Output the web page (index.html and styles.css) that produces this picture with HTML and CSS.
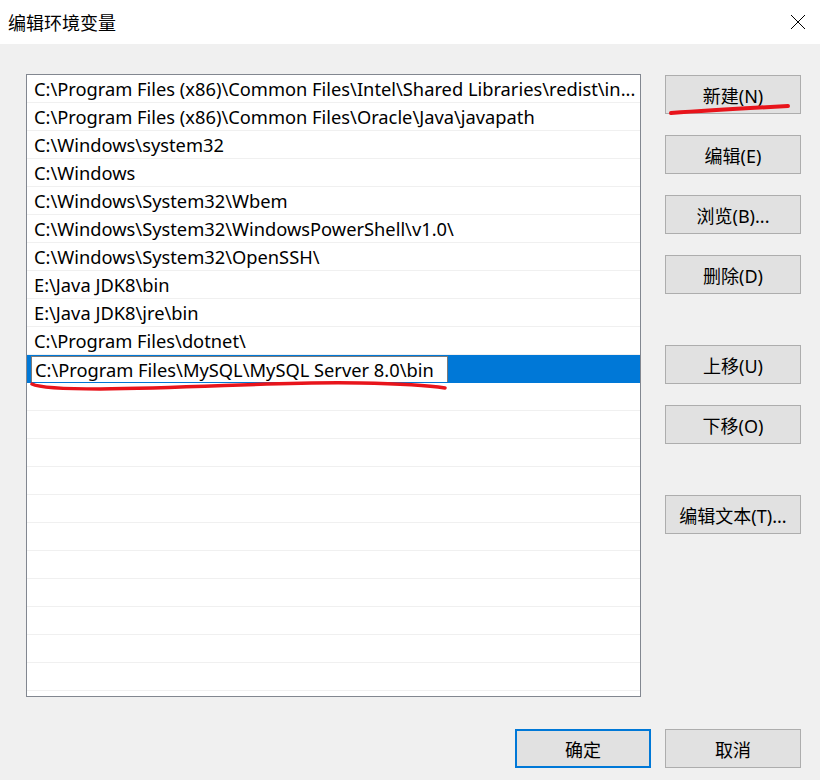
FILE: index.html
```html
<!DOCTYPE html>
<html lang="zh-CN">
<head>
<meta charset="utf-8">
<title>编辑环境变量</title>
<link rel="stylesheet" href="styles.css">
</head>
<body>
<div class="dialog">
  <div class="titlebar">
    <span class="title">编辑环境变量</span>
    <svg class="close" width="16" height="16" viewBox="0 0 16 16"><path d="M1 1 L15 15 M15 1 L1 15" stroke="#000" stroke-width="1" fill="none"/></svg>
  </div>
  <div class="body">
    <div class="main">
      <div class="list">
        <div class="row">C:\Program Files (x86)\Common Files\Intel\Shared Libraries\redist\in...</div>
        <div class="row">C:\Program Files (x86)\Common Files\Oracle\Java\javapath</div>
        <div class="row">C:\Windows\system32</div>
        <div class="row">C:\Windows</div>
        <div class="row">C:\Windows\System32\Wbem</div>
        <div class="row">C:\Windows\System32\WindowsPowerShell\v1.0\</div>
        <div class="row">C:\Windows\System32\OpenSSH\</div>
        <div class="row">E:\Java JDK8\bin</div>
        <div class="row">E:\Java JDK8\jre\bin</div>
        <div class="row">C:\Program Files\dotnet\</div>
        <div class="row selected"><span class="editbox">C:\Program Files\MySQL\MySQL Server 8.0\bin</span></div>
        <div class="row"></div>
        <div class="row"></div>
        <div class="row"></div>
        <div class="row"></div>
        <div class="row"></div>
        <div class="row"></div>
        <div class="row"></div>
        <div class="row"></div>
        <div class="row"></div>
        <div class="row"></div>
        <div class="row"></div>
      </div>
      <div class="side">
        <div class="group">
          <button class="btn">新建(N)</button>
          <button class="btn">编辑(E)</button>
          <button class="btn">浏览(B)...</button>
          <button class="btn">删除(D)</button>
        </div>
        <div class="group">
          <button class="btn">上移(U)</button>
          <button class="btn">下移(O)</button>
        </div>
        <div class="group">
          <button class="btn">编辑文本(T)...</button>
        </div>
      </div>
    </div>
    <div class="footer">
      <button class="btn primary">确定</button>
      <button class="btn">取消</button>
    </div>
  </div>
  <svg class="marks" width="820" height="780" viewBox="0 0 820 780">
    <path d="M671 113 Q 715 110 788 106" stroke="#e8141b" stroke-width="4" stroke-linecap="round" fill="none"/>
    <path d="M32 384 Q 42 389 100 389 C 200 388 290 381 360 383 Q 420 384 445 388" stroke="#e8141b" stroke-width="3.5" stroke-linecap="round" fill="none"/>
  </svg>
</div>
</body>
</html>
```
FILE: styles.css
```css
* { box-sizing: border-box; }
html, body { margin: 0; padding: 0; }
body {
  width: 820px;
  height: 780px;
  background: #f0f0f0;
  font-family: "Noto Sans", "Noto Sans CJK SC", sans-serif;
  color: #000;
  overflow: hidden;
}
.dialog { position: relative; width: 820px; height: 780px; }
.titlebar {
  height: 44px;
  background: #fff;
  display: flex;
  align-items: center;
  justify-content: space-between;
  padding: 0 14px 0 8px;
}
.title { font-family: "Noto Sans CJK SC", sans-serif; font-size: 18px; }
.close { display: block; }
.body { padding: 30px 19px 0 26px; }
.main { display: flex; gap: 24px; }
.list {
  width: 615px;
  height: 623px;
  background: #fff;
  border: 1px solid #828790;
  overflow: hidden;
}
.row {
  height: 28px;
  border-bottom: 1px solid #f0f0f0;
  font-size: 18.3px;
  line-height: 28px;
  padding-left: 7px;
  white-space: nowrap;
  overflow: hidden;
}
.row.selected {
  background: #0078d7;
  padding-left: 4px;
  padding-top: 1px;
  border-bottom-color: #0078d7;
}
.editbox {
  display: inline-block;
  height: 27px;
  line-height: 25px;
  background: #fff;
  border: 1px solid #7a7a7a;
  padding: 0 13px 0 3px;
  vertical-align: top;
}
.side { display: flex; flex-direction: column; gap: 51px; padding-top: 1px; }
.group { display: flex; flex-direction: column; gap: 21px; }
.btn {
  width: 136px;
  height: 39px;
  background: #e1e1e1;
  border: 1px solid #adadad;
  font-family: "Noto Sans", "Noto Sans CJK SC", sans-serif;
  font-size: 18px;
  color: #000;
  padding: 0;
  margin: 0;
}
.btn.primary { border: 2px solid #0078d7; }
.footer {
  display: flex;
  justify-content: flex-end;
  gap: 14px;
  margin-top: 32px;
}
.marks { position: absolute; left: 0; top: 0; pointer-events: none; }
```
